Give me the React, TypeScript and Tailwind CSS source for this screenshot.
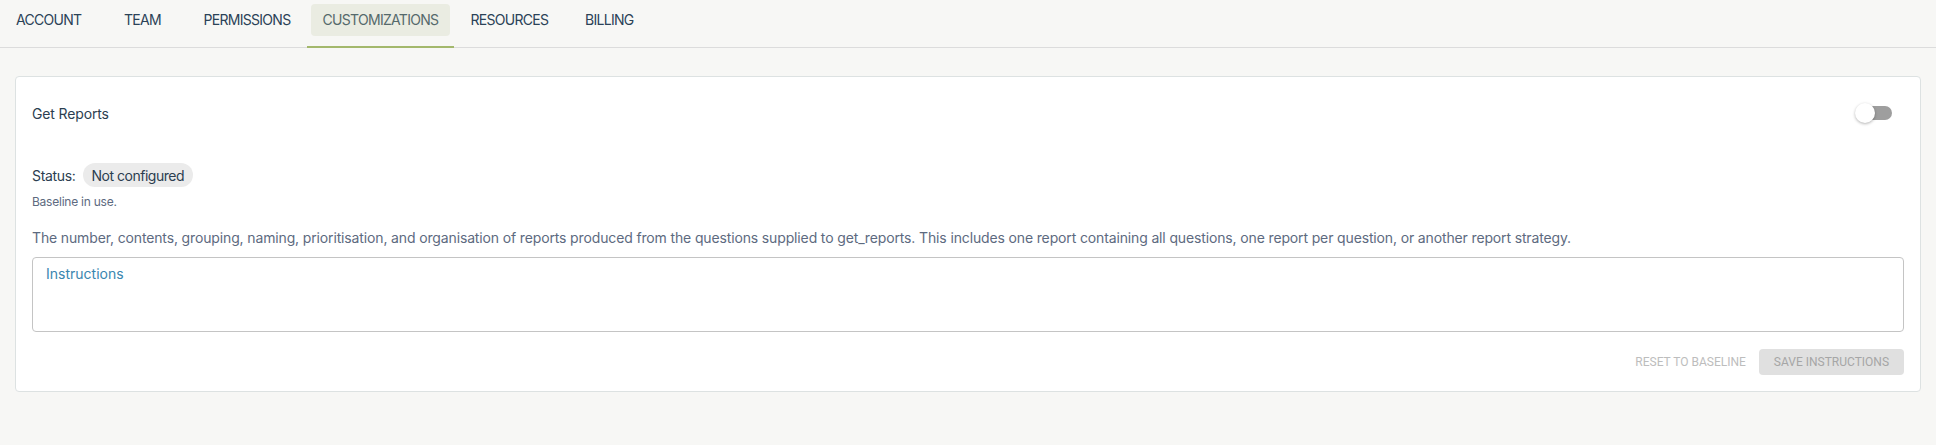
import React, { useState } from 'react';

const tabs = ['Account', 'Team', 'Permissions', 'Customizations', 'Resources', 'Billing'];

export default function App() {
  const [active, setActive] = useState('Customizations');
  const [enabled, setEnabled] = useState(false);
  const [text, setText] = useState('');

  return (
    <div className="min-h-[445px] bg-[#f7f7f5] font-['Inter',sans-serif] text-[#2c3e50]">
      <div className="flex h-12 border-b border-[#dcdcdc]">
        {tabs.map((t) => {
          const on = t === active;
          return (
            <button
              key={t}
              onClick={() => setActive(t)}
              className={`relative min-w-[90px] px-4 pt-1 text-[14px] tracking-[-0.05em] uppercase ${on ? 'text-[#55696b]' : 'text-[#2b4257]'}`}
            >
              <span className={`absolute inset-x-1 top-1 bottom-[11px] rounded ${on ? 'bg-[#eaece2]' : ''}`} />
              <span className="relative -top-1.5">{t}</span>
              {on && <span className="absolute inset-x-0 bottom-[-1px] h-[2px] bg-[#a3b86c]" />}
            </button>
          );
        })}
      </div>

      <div className="p-[15px] pt-[28px]">
        <div className="rounded border border-[#dde2e2] bg-white p-4">
          <div className="flex h-10 items-center justify-between">
            <span className="text-[14px] tracking-[-0.01em]">Get Reports</span>
            <button
              onClick={() => setEnabled(!enabled)}
              className="relative mr-[12px] h-5 w-[37px]"
              aria-label="toggle"
            >
              <span className={`absolute left-[3px] top-[3px] h-[14px] w-[34px] rounded-full ${enabled ? 'bg-[#a3b86c]' : 'bg-[#9e9e9e]'}`} />
              <span
                className={`absolute top-0 h-5 w-5 rounded-full bg-white shadow-[0_1px_3px_rgba(0,0,0,0.3)] ${enabled ? 'left-[17px]' : 'left-0'}`}
              />
            </button>
          </div>

          <div className="mt-[30px] flex items-center gap-[7px] tracking-[-0.02em]">
            <span className="text-[14px]">Status:</span>
            <span className="flex h-6 items-center rounded-full bg-[#ebebeb] px-[9px] text-[14px] tracking-[-0.035em]">
              Not configured
            </span>
          </div>
          <p className="mt-[7px] text-[12px] leading-4 tracking-[-0.02em] text-[#5d6a80]">Baseline in use.</p>

          <p className="mt-[18px] text-[14px] leading-5 tracking-[-0.01em] text-[#5d6a80]">
            The number, contents, grouping, naming, prioritisation, and organisation of reports produced from the
            questions supplied to get_reports. This includes one report containing all questions, one report per
            question, or another report strategy.
          </p>

          <div className="mt-[9px] h-[75px] rounded border border-[#c4c4c4] px-[13px] pt-[6px]">
            <textarea
              value={text}
              onChange={(e) => setText(e.target.value)}
              placeholder="Instructions"
              className="h-full w-full resize-none bg-transparent text-[14px] leading-5 text-[#2c3e50] outline-none placeholder:text-[#3a86b0]"
            />
          </div>

          <div className="mt-[17px] flex items-center justify-end gap-[5px] font-['Roboto',sans-serif]">
            <button className="h-[26px] px-2 text-[12px] uppercase text-[#bdbdbd]">Reset to baseline</button>
            <button className="h-[26px] rounded bg-[#e0e0e0] px-[15px] text-[12px] uppercase text-[#a6a6a6]">
              Save instructions
            </button>
          </div>
        </div>
      </div>
    </div>
  );
}
